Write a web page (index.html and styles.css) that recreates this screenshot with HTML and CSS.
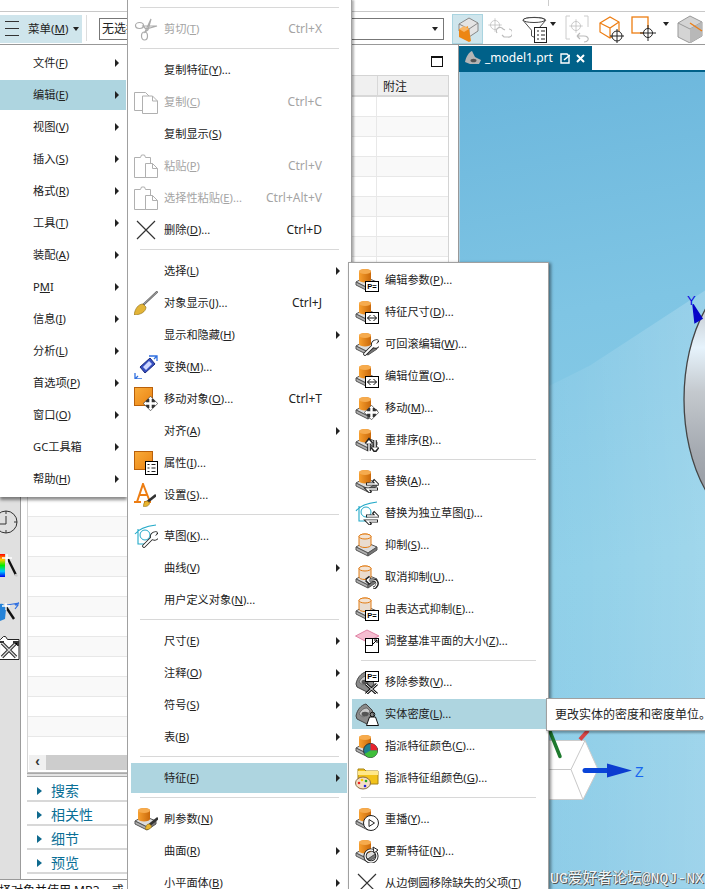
FILE: index.html
```html
<!DOCTYPE html>
<html lang="zh-CN">
<head>
<meta charset="utf-8">
<title>NX 编辑 特征 菜单</title>
<link rel="stylesheet" href="styles.css">
</head>
<body>
<svg class="defs" xmlns="http://www.w3.org/2000/svg">
  <defs>
    <linearGradient id="org" x1="0" x2="1" y1="0" y2="0"><stop offset="0" stop-color="#f8a02f"/><stop offset="1" stop-color="#c9680a"/></linearGradient>
    <linearGradient id="sq" x1="0" x2="1" y1="0" y2="1"><stop offset="0" stop-color="#f9ac3a"/><stop offset="1" stop-color="#ea8212"/></linearGradient>
    <linearGradient id="rain" x1="0" x2="0" y1="0" y2="1"><stop offset="0" stop-color="#f00"/><stop offset=".25" stop-color="#fc0"/><stop offset=".5" stop-color="#0e0"/><stop offset=".75" stop-color="#0cf"/><stop offset="1" stop-color="#00e"/></linearGradient>
    <linearGradient id="ball" x1="0" x2="0" y1="0" y2="1"><stop offset=".15" stop-color="#c8cdd2"/><stop offset=".3" stop-color="#e6f3fc"/><stop offset=".47" stop-color="#c4c9ce"/><stop offset=".69" stop-color="#a6abb2"/><stop offset="1" stop-color="#8c9198"/></linearGradient>
    <linearGradient id="wedge" x1="0" x2="1" y1="0" y2="0"><stop offset="0" stop-color="#fff" stop-opacity="0"/><stop offset=".5" stop-color="#fff" stop-opacity=".08"/><stop offset="1" stop-color="#fff" stop-opacity=".2"/></linearGradient>

    <symbol id="plate" viewBox="0 0 24 24">
      <path d="M1 14 10 9 22 14 13 20Z" fill="#dcdcdc" stroke="#555"/>
      <path d="M1 14v3l12 6v-3Z" fill="#b0b0b0" stroke="#555"/>
      <path d="M13 20v3l9-6v-3Z" fill="#777" stroke="#555"/>
    </symbol>
    <symbol id="feat" viewBox="0 0 24 24">
      <use href="#plate"/>
      <path d="M4 3.500a6 2.500 0 0 1 12 0V12a6 2.500 0 0 1-12 0Z" fill="url(#org)"/>
      <ellipse cx="10" cy="3.500" rx="6" ry="2.500" fill="#f6ab4e"/>
    </symbol>
    <symbol id="supp" viewBox="0 0 24 24">
      <use href="#plate"/>
      <path d="M4 3.500a6 2.500 0 0 1 12 0V12a6 2.500 0 0 1-12 0Z" fill="#e9dccf" stroke="#e27c14"/>
      <ellipse cx="10" cy="3.500" rx="6" ry="2.500" fill="#f3e3d3" stroke="#e27c14"/>
    </symbol>
    <symbol id="solid" viewBox="0 0 24 24">
      <path d="M1 14C2 8 6 3 11 2l6 6 2 6-7 8-10-5Z" fill="#8a8a8a" stroke="#444"/>
      <path d="M4 12c2-4 5-6 8-6l3 3-2 3-5 3Z" fill="#c8c8c8" stroke="#555" stroke-width=".7"/>
      <ellipse cx="10" cy="12" rx="3.500" ry="2.300" fill="#555"/>
    </symbol>
    <symbol id="ov-p" viewBox="0 0 24 24">
      <rect x="10.500" y="13.500" width="13" height="10" fill="#fff" stroke="#000"/>
      <text x="12.300" y="21.200" font-size="7.500" font-weight="700" font-family="Liberation Sans, sans-serif">P=</text>
    </symbol>
    <symbol id="ov-dim" viewBox="0 0 24 24">
      <rect x="10.500" y="12.500" width="13" height="11" fill="#fff" stroke="#000"/>
      <path d="M12.500 18h9m-9 0 3-3m-3 3 3 3m6-3-3-3m3 3-3 3" fill="none" stroke="#111"/>
    </symbol>
    <symbol id="ov-wrench" viewBox="0 0 24 24">
      <path d="M10 22 18 14M18 14c-1-3 1-5 4-5l-2 3 2 1 2-2c0 3-3 5-6 3" fill="#fff" stroke="#222" stroke-width="3.600" stroke-linecap="round" stroke-linejoin="round"/>
      <path d="M10 22 18 14M18 14c-1-3 1-5 4-5l-2 3 2 1 2-2c0 3-3 5-6 3" fill="#fff" stroke="#fff" stroke-width="1.800" stroke-linecap="round" stroke-linejoin="round"/>
    </symbol>
    <symbol id="ov-move" viewBox="0 0 24 24">
      <path d="M16.500 9 24 16.500 16.500 24 9 16.500Z" fill="#333"/>
      <path d="M16.500 11v11M11 16.500h11" stroke="#fff" stroke-width="2.400"/>
      <path d="M16.500 9.500l2.300 2.600h-4.600ZM16.500 23.500l2.300-2.600h-4.600ZM9.500 16.500l2.600-2.300v4.600ZM23.500 16.500l-2.600-2.300v4.600Z" fill="#fff"/>
    </symbol>
    <symbol id="ov-sort" viewBox="0 0 24 24">
      <path d="M14 23V13M11 16l3-4 3 4M20 12v10M17 19l3 4 3-4" fill="none" stroke="#222" stroke-width="3.400"/>
      <path d="M14 23V13M11.600 15.600 14 13l2.400 2.600M20 12v10M17.600 19.400 20 22l2.400-2.600" fill="none" stroke="#fff" stroke-width="1.400"/>
    </symbol>
    <symbol id="ov-swap" viewBox="0 0 24 24">
      <path d="M11 15h11l-4-4M23 20H12l4 4" fill="none" stroke="#222" stroke-width="3.200"/>
      <path d="M12 15h10l-3-3M22 20H12l3 3" fill="none" stroke="#fff" stroke-width="1.400"/>
    </symbol>
    <symbol id="ov-undo" viewBox="0 0 24 24">
      <path d="M11 15h7c4 0 5 3 4 5s-3 3-4 3M11 15l4-3M11 15l4 4" fill="none" stroke="#222" stroke-width="3"/>
      <path d="M12 15h6c3.500 0 4.500 3 3.500 5s-2.500 3-3.500 3M12 15l3-2.200M12 15l3 2.800" fill="none" stroke="#fff" stroke-width="1.200"/>
    </symbol>
    <symbol id="ov-play" viewBox="0 0 24 24">
      <circle cx="16" cy="16" r="7.500" fill="#fff" stroke="#222"/>
      <path d="M14 12.500 19.500 16 14 19.500Z" fill="#fff" stroke="#222"/>
    </symbol>
    <symbol id="ov-update" viewBox="0 0 24 24">
      <circle cx="16" cy="17" r="6" fill="none" stroke="#222" stroke-width="3.200"/>
      <circle cx="16" cy="17" r="6" fill="none" stroke="#fff" stroke-width="1.300"/>
      <path d="M18 8l5 3-4 3Z" fill="#fff" stroke="#222"/>
    </symbol>
    <symbol id="ov-brush" viewBox="0 0 24 24">
      <path d="M24 11 14 19" stroke="#333" stroke-width="2.600"/>
      <path d="M15.500 17c-3 0-4 2-4 5.500 3 .5 6-1 6-3.500Z" fill="#e9b52f" stroke="#8a6a10" stroke-width=".6"/>
    </symbol>
    <symbol id="ov-color" viewBox="0 0 24 24">
      <circle cx="15.500" cy="16.500" r="7" fill="#1f7f8f" stroke="#333"/>
      <path d="M15.500 16.500V9.500a7 7 0 0 1 7 7Z" fill="#e8222c"/>
      <path d="M15.500 16.500h7a7 7 0 0 1-13 3.500Z" fill="#3fbe3a"/>
    </symbol>
    <symbol id="ov-weight" viewBox="0 0 24 24">
      <circle cx="17.500" cy="12.500" r="2.300" fill="none" stroke="#111"/>
      <path d="M14.500 15h6l3 8.500h-12Z" fill="#fff" stroke="#111"/>
    </symbol>
    <symbol id="ov-x" viewBox="0 0 24 24">
      <path d="M11 14 22 24M22 14 11 24" stroke="#111" stroke-width="3"/>
      <path d="M11 14 22 24M22 14 11 24" stroke="#fff" stroke-width="1"/>
    </symbol>
    <symbol id="i-x" viewBox="0 0 24 24"><path d="M3 3 21 21M21 3 3 21" fill="none" stroke="#333" stroke-width="1.200"/></symbol>
    <symbol id="i-cut" viewBox="0 0 24 24">
      <g fill="none" stroke="#aaa" stroke-width="1.200">
        <ellipse cx="5.500" cy="8.500" rx="4" ry="3"/><ellipse cx="10.500" cy="19" rx="3" ry="4"/>
        <path d="M9 9 23 9 12 12ZM11 15 17 2 14 13Z"/>
      </g>
    </symbol>
    <symbol id="i-copy" viewBox="0 0 24 24">
      <g fill="#fff" stroke="#b0b0b0">
        <path d="M.5 2.500h11l5 5v13H.5Z"/><path d="M8.500 6h10l5 5v12.500h-15Z"/>
        <path d="M18.500 6v5h5" fill="none"/>
      </g>
    </symbol>
    <symbol id="i-paste" viewBox="0 0 24 24">
      <g fill="#fff" stroke="#b0b0b0">
        <path d="M.5 3.500h6l1-2.500h3l1 2.500h5v20H.500Z"/><path d="M11.500 9.500h7l5 5v9h-12Z"/><path d="M18.500 9.500v5h5" fill="none"/>
      </g>
    </symbol>
    <symbol id="i-brush" viewBox="0 0 24 24">
      <path d="M24 0 8 15" stroke="#666" stroke-width="2.200"/><path d="M24 0 10 13" stroke="#ccc" stroke-width=".6"/>
      <path d="M9 13C4 13 1 18 0 24c6 0 12-3 12-8Z" fill="#e3b437" stroke="#8a6a10" stroke-width=".6"/>
    </symbol>
    <symbol id="i-trans" viewBox="0 0 24 24">
      <path d="M6 12 16 3 21 9 11 18Z" fill="#3750c0" stroke="#1a2a80"/>
      <path d="M9 12 15 6 18 9 12 15Z" fill="#cfd8ff"/>
      <path d="M15 1h8v5M1 18v6h7M1 24l3-3M23 1l-3 3" fill="none" stroke="#2f6fe0" stroke-width="1.300"/>
    </symbol>
    <symbol id="i-sq" viewBox="0 0 24 24"><rect x=".5" y=".5" width="18" height="18" fill="url(#sq)" stroke="#b9600a"/></symbol>
    <symbol id="ov-list" viewBox="0 0 24 24">
      <rect x="11.500" y="10.500" width="12" height="13" fill="#fff" stroke="#000"/>
      <path d="M13.500 13.500h2m2 0h4M13.500 17h2m2 0h4M13.500 20.500h2m2 0h4" stroke="#222"/>
    </symbol>
    <symbol id="i-a" viewBox="0 0 24 24">
      <path d="M0 19h7M10 19h7M3 19 9 1l7 18M5.500 12h7" fill="none" stroke="#ed7d12" stroke-width="2"/>
      <use href="#ov-brush" x="-2" y="1"/>
    </symbol>
    <symbol id="i-sk" viewBox="0 0 24 24">
      <path d="M1 10Q6 3 22 1M4 5V20H12" fill="none" stroke="#22a9c8" stroke-width="1.100"/>
      <circle cx="11" cy="11" r="5" fill="none" stroke="#22a9c8"/>
    </symbol>
    <symbol id="i-plane" viewBox="0 0 24 24">
      <path d="M.5 7 12 1 24 7 12 13Z" fill="#f5bdd0" stroke="#e083a5"/>
      <rect x="10.500" y="9.500" width="13" height="14" fill="#fff" stroke="#000"/>
      <path d="M10.500 16.500h7v-7" fill="none" stroke="#000"/>
      <path d="M17 16 22 11M19 11h3v3" fill="none" stroke="#000"/>
    </symbol>
    <symbol id="i-folder" viewBox="0 0 24 24">
      <path d="M3 3h6l2 2h12v13H3Z" fill="#f2c21a" stroke="#a78416"/>
      <path d="M3 5h20v4H3Z" fill="#ffe88a"/>
      <ellipse cx="8" cy="17" rx="7.500" ry="6" fill="#f3dfc4" stroke="#8a6a40"/>
      <circle cx="4" cy="17" r="1.300" fill="#e22"/><circle cx="7" cy="14" r="1.300" fill="#fc0"/><circle cx="11" cy="15" r="1.300" fill="#2a2"/><circle cx="10" cy="20" r="1.300" fill="#22d"/>
    </symbol>
    <symbol id="i-target" viewBox="0 0 24 24">
      <circle cx="12" cy="12" r="6" fill="none" stroke="currentColor"/>
      <path d="M12 3v18M3 12h18" stroke="currentColor"/>
    </symbol>
  </defs>
</svg>

<div class="app">
  <div class="titlebar"><span class="title-tick"></span></div>
  <div class="toolbar">
    <button class="menu-btn">
      <span class="burger"><i></i><i></i><i></i></span>
      <span class="menu-btn-label">菜单(<u>M</u>)</span>
      <span class="drop"></span>
    </button>
    <span class="tsep"></span>
    <div class="combo"><span class="combo-text">无选择</span><span class="drop"></span></div>
    <span class="tool on">
      <svg width="24" height="28" viewBox="0 0 24 28">
        <path d="M3 9 13 3 22 8v8l-9 6-10-6Z" fill="#e4e4e4" stroke="#888"/>
        <path d="M3 9 13 14 22 8M13 14v8" fill="none" stroke="#888"/>
        <path d="M3 15 12 11 13 26 3 21Z" fill="#f59a2b"/>
        <path d="M13 14 15 26 13 27 3 22V14Z" fill="#ed8613"/>
        <path d="M3 14 8 11 13 14 8 17Z" fill="#f9b768"/>
      </svg>
    </span>
    <span class="tool t-a">
      <svg width="26" height="28" viewBox="0 0 26 28" color="#bbb">
        <use href="#i-target" width="18" height="18" y="1"/>
        <path d="M10 18a3.500 3.500 0 0 1 6-4l2 1M22 14a3.500 3.500 0 0 1-1 8h-4l-2-2" transform="translate(1 0)" fill="none" stroke="#bbb" stroke-width="1.200"/>
      </svg>
    </span>
    <span class="tool t-b">
      <svg width="26" height="28" viewBox="0 0 26 28">
        <path d="M1 5.500a12 3 0 0 1 24 0L16 16v9l-6-3v-6Z" transform="scale(.95)" fill="#fff" stroke="#444"/>
        <ellipse cx="12" cy="5" rx="11" ry="2.500" fill="#fff" stroke="#444"/>
        <rect x="12.500" y="12.500" width="12" height="15" fill="#fff" stroke="#222"/>
        <path d="M15 16h2m2 0h4M15 20h2m2 0h4M15 24h2m2 0h4" stroke="#222"/>
      </svg>
      <span class="drop d-gap"></span>
    </span>
    <span class="tool t-c">
      <svg width="25" height="28" viewBox="0 0 25 28" color="#bbb">
        <path d="M5 1H1v23h4M19 1h4v11" fill="none" stroke="#ccc"/>
        <use href="#i-target" x="2" y="2" width="18" height="18"/>
        <path d="M12 21h7c3 0 5 2 4 4s-3 2-4 2M12 21l3-3M12 21l3 3" fill="none" stroke="#bbb" stroke-width="1.200"/>
      </svg>
    </span>
    <span class="tool t-d">
      <svg width="25" height="28" viewBox="0 0 25 28" color="#222">
        <path d="M1 8 11 2l9 5v10l-9 6-10-6Z" fill="#fff" stroke="#ed7d12" stroke-width="1.200"/>
        <path d="M1 8 11 13 20 7M11 13v10" fill="none" stroke="#ed7d12" stroke-width="1.200"/>
        <circle cx="18" cy="21" r="5" fill="#fff" stroke="#222"/><path d="M18 14v14M11 21h14" stroke="#222"/>
      </svg>
    </span>
    <span class="tool t-e">
      <svg width="26" height="28" viewBox="0 0 26 28">
        <rect x="1" y="2" width="16" height="16" fill="#fff" stroke="#ed7d12" stroke-width="1.300"/>
        <circle cx="17" cy="18" r="4.500" fill="#fff" stroke="#222"/><path d="M17 10v16M9 18h16" stroke="#222"/>
      </svg>
      <span class="drop d-gap2"></span>
    </span>
    <span class="tool t-f">
      <svg width="26" height="28" viewBox="0 0 26 28">
        <path d="M1 8 13 1l12 6v14l-12 7-12-6Z" fill="#d4d4d4" stroke="#999"/>
        <path d="M1 8 13 14 25 7" fill="none" stroke="#999"/>
        <path d="M13 14 25 7v14l-12 7Z" fill="#b8b8b8"/>
        <path d="M13 8 25 16" stroke="#ed7d12" stroke-width="1.300"/>
      </svg>
    </span>
  </div>

  <div class="main">
    <div class="left">
      <div class="left-row">
        <div class="rail">
          <svg class="rail-ic" viewBox="0 0 20 24"><circle cx="6" cy="12" r="11" fill="none" stroke="#333"/><path d="M6 1v3M6 23v-3M17 12h-3M6 6v8H0" fill="none" stroke="#333"/></svg>
          <svg class="rail-ic" viewBox="0 0 20 24"><rect x="0" y="0" width="5" height="23" fill="url(#rain)"/><path d="M8 5 16 21" stroke="#111" stroke-width="2.400"/><path d="M15.500 20 17 22.500" stroke="#ccc" stroke-width="2.400"/><path d="M7 4h-5M7 4V-1M7 4h5M7 4v5" stroke="#fff" stroke-width="1.500"/></svg>
          <svg class="rail-ic" viewBox="0 0 20 24"><path d="M0 6c3-1 5 1 6 5l-1 10-5 2Z" fill="#2583d8"/><path d="M7 7 19 5l-4 2h3l-3 4" fill="none" stroke="#2f6fe0" stroke-width="1.200"/><path d="M6 9 14 21" stroke="#111" stroke-width="2.400"/><path d="M6 5v7M2 8h8" stroke="#fff" stroke-width="1.400"/></svg>
          <svg class="rail-ic tools" viewBox="0 0 20 24"><path d="M.5 3.500H0M.5 3.500l3-3h2l2 3h11.500v20H0" fill="#fff" stroke="#222"/><path d="M2 21 16 7M2 7 16 21" stroke="#333" stroke-width="3.400"/><path d="M2 21 16 7M2 7 16 21" stroke="#ddd" stroke-width="1.200"/><path d="M13 6h5v4M0 6h4" stroke="#333" stroke-width="2"/></svg>
        </div>
        <div class="panel">
          <div class="panel-head"><span class="maxbox"></span></div>
          <div class="table">
            <div class="thead"><span class="th-main"></span><span class="th-note">附注</span></div>
            <div class="rows"></div>
            <div class="filler"></div>
            <div class="hscroll"><span class="hbtn">‹</span></div>
          </div>
          <div class="splitter"></div>
          <div class="accordion">
            <div class="acc"><span class="tri"></span>搜索</div>
            <div class="acc"><span class="tri"></span>相关性</div>
            <div class="acc"><span class="tri"></span>细节</div>
            <div class="acc"><span class="tri"></span>预览</div>
          </div>
        </div>
      </div>
      <div class="status"><span class="status-text">择对象并使用 MB3，或</span></div>
    </div>

    <div class="view">
      <div class="tabs">
        <div class="tab">
          <svg width="17" height="15" viewBox="0 0 17 15"><path d="M0 11C1 6 4 1 7 0l3 6 6 3-2 4H5Z" fill="#b5b5b5"/><ellipse cx="8.500" cy="9.500" rx="3" ry="1.800" fill="#555"/></svg>
          <span class="tab-name">_model1.prt</span>
          <svg class="tab-doc" width="10" height="11" viewBox="0 0 10 11"><path d="M1 1h6l2 2v7H1Z" fill="none" stroke="#fff" stroke-width="1.400"/><path d="M4 7 10 2" stroke="#fff" stroke-width="1.600"/></svg>
          <svg class="tab-x" width="9" height="9" viewBox="0 0 9 9"><path d="M1 1 8 8M8 1 1 8" stroke="#fff" stroke-width="2"/></svg>
        </div>
      </div>
      <div class="canvas">
        <svg class="scene" viewBox="0 0 245 816">
          <path d="M245 218 130 293 0 358V816H245Z" fill="url(#wedge)"/>
          <ellipse cx="300" cy="327" rx="76" ry="130" fill="url(#ball)" stroke="#444" stroke-width="1.300"/>
          <path d="M233 232 242 246 235 250Z" fill="#0606c8" stroke="#0606c8" stroke-width="1.500"/>
          <path d="M89 668 125 668 138 697 123 727 89 727Z" fill="#fff" stroke="#ccc"/>
          <path d="M125 668 111 697 123 727M89 697H111" fill="none" stroke="#c8c8c8"/>
          <path d="M90 659 100 684" stroke="#1e7a2e" stroke-width="3.500" stroke-linecap="round"/>
          <path d="M120 667 128 658" stroke="#d64545" stroke-width="4"/>
          <path d="M125 698H152" stroke="#0a44d8" stroke-width="5" stroke-linecap="round"/>
          <path d="M147 691 172 698 147 705Z" fill="#0b3cd0"/>
          <text class="axis-z" x="175" y="704">Z</text>
          <text class="axis-y" x="227" y="232">Y</text>
        </svg>
        <span class="watermark">UG爱好者论坛@NQJ-NX</span>
      </div>
    </div>
  </div>
</div>

<!-- 一级菜单 -->
<nav class="menu menu-a">
  <div class="item"><span class="label">文件(<u>F</u>)</span><span class="ar"></span></div>
  <div class="item hl"><span class="label">编辑(<u>E</u>)</span><span class="ar"></span></div>
  <div class="item"><span class="label">视图(<u>V</u>)</span><span class="ar"></span></div>
  <div class="item"><span class="label">插入(<u>S</u>)</span><span class="ar"></span></div>
  <div class="item"><span class="label">格式(<u>R</u>)</span><span class="ar"></span></div>
  <div class="item"><span class="label">工具(<u>T</u>)</span><span class="ar"></span></div>
  <div class="item"><span class="label">装配(<u>A</u>)</span><span class="ar"></span></div>
  <div class="item"><span class="label">P<u>M</u>I</span><span class="ar"></span></div>
  <div class="item"><span class="label">信息(<u>I</u>)</span><span class="ar"></span></div>
  <div class="item"><span class="label">分析(<u>L</u>)</span><span class="ar"></span></div>
  <div class="item"><span class="label">首选项(<u>P</u>)</span><span class="ar"></span></div>
  <div class="item"><span class="label">窗口(<u>O</u>)</span><span class="ar"></span></div>
  <div class="item"><span class="label">GC工具箱</span><span class="ar"></span></div>
  <div class="item"><span class="label">帮助(<u>H</u>)</span><span class="ar"></span></div>
</nav>

<!-- 编辑 子菜单 -->
<nav class="menu menu-b">
  <div class="sep"></div>
  <div class="item off"><svg class="ic"><use href="#i-cut"/></svg><span class="label">剪切(<u>T</u>)</span><span class="kb">Ctrl+X</span></div>
  <div class="sep"></div>
  <div class="item"><span class="ic"></span><span class="label">复制特征(<u>Y</u>)...</span></div>
  <div class="item off"><svg class="ic"><use href="#i-copy"/></svg><span class="label">复制(<u>C</u>)</span><span class="kb">Ctrl+C</span></div>
  <div class="item"><span class="ic"></span><span class="label">复制显示(<u>S</u>)</span></div>
  <div class="item off"><svg class="ic"><use href="#i-paste"/></svg><span class="label">粘贴(<u>P</u>)</span><span class="kb">Ctrl+V</span></div>
  <div class="item off"><svg class="ic"><use href="#i-paste"/></svg><span class="label">选择性粘贴(<u>E</u>)...</span><span class="kb">Ctrl+Alt+V</span></div>
  <div class="item"><svg class="ic"><use href="#i-x"/></svg><span class="label">删除(<u>D</u>)...</span><span class="kb">Ctrl+D</span></div>
  <div class="sep"></div>
  <div class="item"><span class="ic"></span><span class="label">选择(<u>L</u>)</span><span class="ar"></span></div>
  <div class="item"><svg class="ic"><use href="#i-brush"/></svg><span class="label">对象显示(<u>J</u>)...</span><span class="kb">Ctrl+J</span></div>
  <div class="item"><span class="ic"></span><span class="label">显示和隐藏(<u>H</u>)</span><span class="ar"></span></div>
  <div class="item"><svg class="ic"><use href="#i-trans"/></svg><span class="label">变换(<u>M</u>)...</span></div>
  <div class="item"><svg class="ic"><use href="#i-sq"/><use href="#ov-move"/></svg><span class="label">移动对象(<u>O</u>)...</span><span class="kb">Ctrl+T</span></div>
  <div class="item"><span class="ic"></span><span class="label">对齐(<u>A</u>)</span><span class="ar"></span></div>
  <div class="item"><svg class="ic"><use href="#i-sq"/><use href="#ov-list"/></svg><span class="label">属性(<u>I</u>)...</span></div>
  <div class="item"><svg class="ic"><use href="#i-a"/></svg><span class="label">设置(<u>S</u>)...</span></div>
  <div class="sep"></div>
  <div class="item"><svg class="ic"><use href="#i-sk"/><use href="#ov-wrench"/></svg><span class="label">草图(<u>K</u>)...</span></div>
  <div class="item"><span class="ic"></span><span class="label">曲线(<u>V</u>)</span><span class="ar"></span></div>
  <div class="item"><span class="ic"></span><span class="label">用户定义对象(<u>N</u>)...</span></div>
  <div class="sep"></div>
  <div class="item"><span class="ic"></span><span class="label">尺寸(<u>E</u>)</span><span class="ar"></span></div>
  <div class="item"><span class="ic"></span><span class="label">注释(<u>O</u>)</span><span class="ar"></span></div>
  <div class="item"><span class="ic"></span><span class="label">符号(<u>S</u>)</span><span class="ar"></span></div>
  <div class="item"><span class="ic"></span><span class="label">表(<u>B</u>)</span><span class="ar"></span></div>
  <div class="sep"></div>
  <div class="item hl"><span class="ic"></span><span class="label">特征(<u>F</u>)</span><span class="ar"></span></div>
  <div class="sep"></div>
  <div class="item"><svg class="ic"><use href="#feat"/><use href="#ov-brush"/></svg><span class="label">刷参数(<u>N</u>)</span></div>
  <div class="item"><span class="ic"></span><span class="label">曲面(<u>R</u>)</span><span class="ar"></span></div>
  <div class="item"><span class="ic"></span><span class="label">小平面体(<u>B</u>)</span><span class="ar"></span></div>
</nav>

<!-- 特征 子菜单 -->
<nav class="menu menu-c">
  <div class="item"><svg class="ic"><use href="#feat"/><use href="#ov-p"/></svg><span class="label">编辑参数(<u>P</u>)...</span></div>
  <div class="item"><svg class="ic"><use href="#feat"/><use href="#ov-dim"/></svg><span class="label">特征尺寸(<u>D</u>)...</span></div>
  <div class="item"><svg class="ic"><use href="#feat"/><use href="#ov-wrench"/></svg><span class="label">可回滚编辑(<u>W</u>)...</span></div>
  <div class="item"><svg class="ic"><use href="#feat"/><use href="#ov-dim"/></svg><span class="label">编辑位置(<u>O</u>)...</span></div>
  <div class="item"><svg class="ic"><use href="#feat"/><use href="#ov-move"/></svg><span class="label">移动(<u>M</u>)...</span></div>
  <div class="item"><svg class="ic"><use href="#feat"/><use href="#ov-sort"/></svg><span class="label">重排序(<u>R</u>)...</span></div>
  <div class="sep"></div>
  <div class="item"><svg class="ic"><use href="#feat"/><use href="#ov-swap"/></svg><span class="label">替换(<u>A</u>)...</span></div>
  <div class="item"><svg class="ic"><use href="#i-sk"/><use href="#ov-swap"/></svg><span class="label">替换为独立草图(<u>I</u>)...</span></div>
  <div class="item"><svg class="ic"><use href="#supp"/></svg><span class="label">抑制(<u>S</u>)...</span></div>
  <div class="item"><svg class="ic"><use href="#supp"/><use href="#ov-undo"/></svg><span class="label">取消抑制(<u>U</u>)...</span></div>
  <div class="item"><svg class="ic"><use href="#supp"/><use href="#ov-p"/></svg><span class="label">由表达式抑制(<u>E</u>)...</span></div>
  <div class="item"><svg class="ic"><use href="#i-plane"/></svg><span class="label">调整基准平面的大小(<u>Z</u>)...</span></div>
  <div class="sep"></div>
  <div class="item"><svg class="ic"><use href="#solid"/><use href="#ov-x"/><use href="#ov-p" y="-12"/></svg><span class="label">移除参数(<u>V</u>)...</span></div>
  <div class="item hl"><svg class="ic"><use href="#solid"/><use href="#ov-weight"/></svg><span class="label">实体密度(<u>L</u>)...</span></div>
  <div class="item"><svg class="ic"><use href="#feat"/><use href="#ov-color"/></svg><span class="label">指派特征颜色(<u>C</u>)...</span></div>
  <div class="item"><svg class="ic"><use href="#i-folder"/></svg><span class="label">指派特征组颜色(<u>G</u>)...</span></div>
  <div class="sep"></div>
  <div class="item"><svg class="ic"><use href="#feat"/><use href="#ov-play"/></svg><span class="label">重播(<u>Y</u>)...</span></div>
  <div class="item"><svg class="ic"><use href="#feat"/><use href="#ov-update"/></svg><span class="label">更新特征(<u>N</u>)...</span></div>
  <div class="item"><svg class="ic"><use href="#i-x"/></svg><span class="label">从边倒圆移除缺失的父项(<u>T</u>)</span></div>
</nav>

<div class="tip">更改实体的密度和密度单位。</div>
</body>
</html>
```

FILE: styles.css
```css
* { box-sizing: border-box; }
html, body { margin: 0; padding: 0; width: 705px; height: 889px; overflow: hidden; }
body {
  position: relative;
  background: #fff;
  color: #222;
  font: 12px/16px "Noto Sans", "Noto Sans CJK SC", sans-serif;
}
u { text-underline-offset: 1px; }
.defs { display: block; width: 0; height: 0; }

.app { display: flex; flex-direction: column; height: 889px; overflow: hidden; }
.titlebar { height: 12px; flex: none; padding-left: 548px; background: #fff; border-bottom: 1px solid #c8c8c8; }
.title-tick { display: block; width: 1px; height: 6px; background: #ccc; }

/* toolbar */
.toolbar {
  flex: none; height: 33px; display: flex; align-items: center;
  background: #fff; border-bottom: 1px solid #999; overflow: hidden;
}
.menu-btn {
  width: 82px; height: 28px; margin-top: 1px; padding: 0 0 0 5px; flex: none;
  display: flex; align-items: center; border: 0; background: #cfe5ec; font: inherit; font-size: 11.500px; color: inherit;
}
.burger { display: flex; flex-direction: column; gap: 6px; width: 14px; }
.burger i { display: block; height: 1px; background: #333; }
.menu-btn-label { margin-left: 9px; }
.drop {
  display: inline-block; width: 0; height: 0; flex: none;
  border: 3px solid transparent; border-top: 4px solid #222; border-bottom: 0;
}
.menu-btn .drop { margin-left: 5px; }
.tsep { width: 1px; height: 26px; margin: 0 12px 0 4px; background: #ddd; flex: none; }
.combo {
  width: 345px; height: 22px; flex: none; margin-top: 1px; padding: 0 5px 0 2px;
  display: flex; align-items: center; justify-content: space-between;
  border: 1px solid #777; background: #fff;
}
.combo-text { width: 26px; overflow: hidden; white-space: nowrap; }
.tool { display: flex; align-items: center; flex: none; margin-top: 1px; height: 30px; }
.tool svg { display: block; }
.tool.on {
  width: 31px; margin-left: 8px; justify-content: center;
  background: #cfe5ec; border: 1px solid #a9d4e0;
}
.t-a { margin-left: 3px; }
.t-b { margin-left: 10px; }
.d-gap { margin-left: 2px; margin-bottom: 10px; }
.t-c { margin-left: 9px; }
.t-d { margin-left: 9px; }
.t-e { margin-left: 7px; }
.d-gap2 { margin-left: 6px; margin-bottom: 10px; }
.t-f { margin-left: 8px; }

/* body */
.main { flex: 1; min-height: 0; display: flex; }
.left { width: 459px; flex: none; display: flex; flex-direction: column; border-right: 1px solid #999; }
.left-row { flex: 1; min-height: 0; display: flex; }

.rail {
  width: 21px; flex: none; padding-top: 465px;
  display: flex; flex-direction: column; gap: 20px;
  background: #e0e0e0; border-right: 1px solid #9c9c9c;
}
.rail-ic { display: block; width: 20px; height: 24px; overflow: hidden; }
.rail-ic.tools { margin-top: -6px; }

.panel { flex: 1; min-width: 0; display: flex; flex-direction: column; padding: 0 9px 0 6px; background: #fff; }
.panel-head { height: 30px; flex: none; display: flex; justify-content: flex-end; padding: 11px 6px 0 0; }
.maxbox { width: 12px; height: 11px; border: 1px solid #111; border-top-width: 2px; }

.table { height: 698px; flex: none; display: flex; flex-direction: column; border: 1px solid #d4d4d4; border-bottom-color: #bbb; }
.thead { height: 21px; flex: none; display: flex; background: #f0f0f0; border-bottom: 2px solid #d8d8d8; }
.th-main { flex: 1; }
.th-note { width: 71px; padding-left: 5px; border-left: 1px solid #d8d8d8; line-height: 22px; font-size: 12px; }
.rows {
  height: 640px; flex: none;
  background:
    linear-gradient(#e8e8e8, #e8e8e8) 348px 0 / 1px 100% no-repeat,
    repeating-linear-gradient(to bottom, #fff 0 19px, #e8e8e8 19px 20px, #f9f9f9 20px 39px, #e8e8e8 39px 40px);
}
.filler { flex: 1; }
.hscroll { height: 15px; margin-bottom: 2px; flex: none; margin-left: 1px; background: #cdcdcd; }
.hbtn {
  display: block; width: 17px; height: 15px; background: #f0f0f0; color: #333;
  font: 700 14px/13px "Liberation Sans", sans-serif; text-align: center;
}
.splitter { height: 4px; flex: none; background: #e4e4e4; border: 1px solid #aaa; border-width: 1px 0; }
.accordion { flex: none; padding-top: 1px; }
.acc {
  height: 24px; display: flex; align-items: center; padding: 4px 0 0 10px;
  border-bottom: 2px solid #d8d8d8; color: #0a6f96; font-size: 14px; line-height: 18px;
}
.tri { width: 0; height: 0; margin-right: 9px; border: 4.500px solid transparent; border-left: 5px solid #0f6a8e; border-right: 0; }
.status { height: 10px; flex: none; background: #fff; border-top: 1px solid #999; overflow: hidden; white-space: nowrap; }
.status-text { display: block; margin-left: -1px; width: 128px; overflow: hidden; line-height: 22px; color: #111; }

/* viewport */
.view { flex: 1; min-width: 0; display: flex; flex-direction: column; }
.tabs { height: 27px; flex: none; padding-top: 1px; background: #fff; border-bottom: 2px solid #006189; }
.tab {
  width: 133px; height: 24px; padding-left: 6px;
  display: flex; align-items: center; background: #006189; color: #fff;
  font-size: 12px;
}
.tab-name { margin-left: 3px; }
.tab-doc { margin-left: 7px; }
.tab-x { margin-left: 6px; }
.canvas {
  flex: 1; min-height: 0; position: relative; overflow: hidden; border-left: 1px solid #aacfe2;
  background: linear-gradient(170deg, #6bb6dc 0%, #7fc5e4 30%, #89cde7 60%, #87c9e6 100%);
}
.scene { display: block; width: 100%; height: 100%; }
.axis-z { font: 14px "Liberation Sans", sans-serif; fill: #1665f0; }
.axis-y { font: 13px "Liberation Sans", sans-serif; fill: #0a0ae0; }
.watermark {
  position: absolute; left: 90px; bottom: 0; z-index: 1; white-space: nowrap;
  font: 14.800px/20px "Liberation Mono", "Noto Sans CJK SC", monospace;
  color: #f2f6f6; text-shadow: 1px 1px 0 #555, -1px 0 0 #777;
}

/* menus */
.menu { position: absolute; display: flex; flex-direction: column; background: #fff; font-size: 11.200px; overflow: hidden; }
.menu-a { left: 0; top: 45px; width: 127px; height: 452px; padding-top: 2px; box-shadow: 0 3px 3px rgba(0,0,0,.45); }
.menu-b { left: 127px; top: 0; width: 225px; height: 889px; padding-top: 4px; border: 1px solid #a0a0a0; border-width: 0 1px; box-shadow: 2px 0 2px rgba(0,0,0,.3); }
.menu-c { left: 348px; top: 262px; width: 201px; height: 627px; padding-top: 1px; border: 1px solid #a0a0a0; border-bottom: 0; box-shadow: 2px 1px 3px rgba(0,0,0,.45); }

.item { flex: none; height: 30px; margin: 1px 4px 1px 3px; padding-left: 3px; display: flex; align-items: center; white-space: nowrap; }
.menu-a .item { margin: 1px 1px 1px 0; padding-left: 33px; }
.menu-c .item { margin-right: 2px; }
.item.hl { background: #aed5e0; }
.item.off { color: #a4a4a4; }
.ic { display: block; flex: none; width: 24px; height: 24px; margin-right: 6px; overflow: visible; }
.label { flex: 1; min-width: 0; }
.kb { margin-right: 25px; font-size: 12px; }
.ar {
  flex: none; width: 0; height: 0; margin-right: 7px;
  border: 4px solid transparent; border-left: 4px solid #222; border-right: 0;
}
.sep { flex: none; height: 9px; margin: 0 12px; padding-top: 3px; }
.sep::before { content: ""; display: block; height: 1px; background: #d8d8d8; }

.tip {
  position: absolute; left: 546px; top: 698px; width: 159px; height: 33px; padding-left: 8px;
  display: flex; align-items: center; white-space: nowrap; overflow: hidden;
  background: #fff; border: 1px solid #a0a0a0; border-right: 0; box-shadow: 1px 2px 2px rgba(0,0,0,.3);
}
```
